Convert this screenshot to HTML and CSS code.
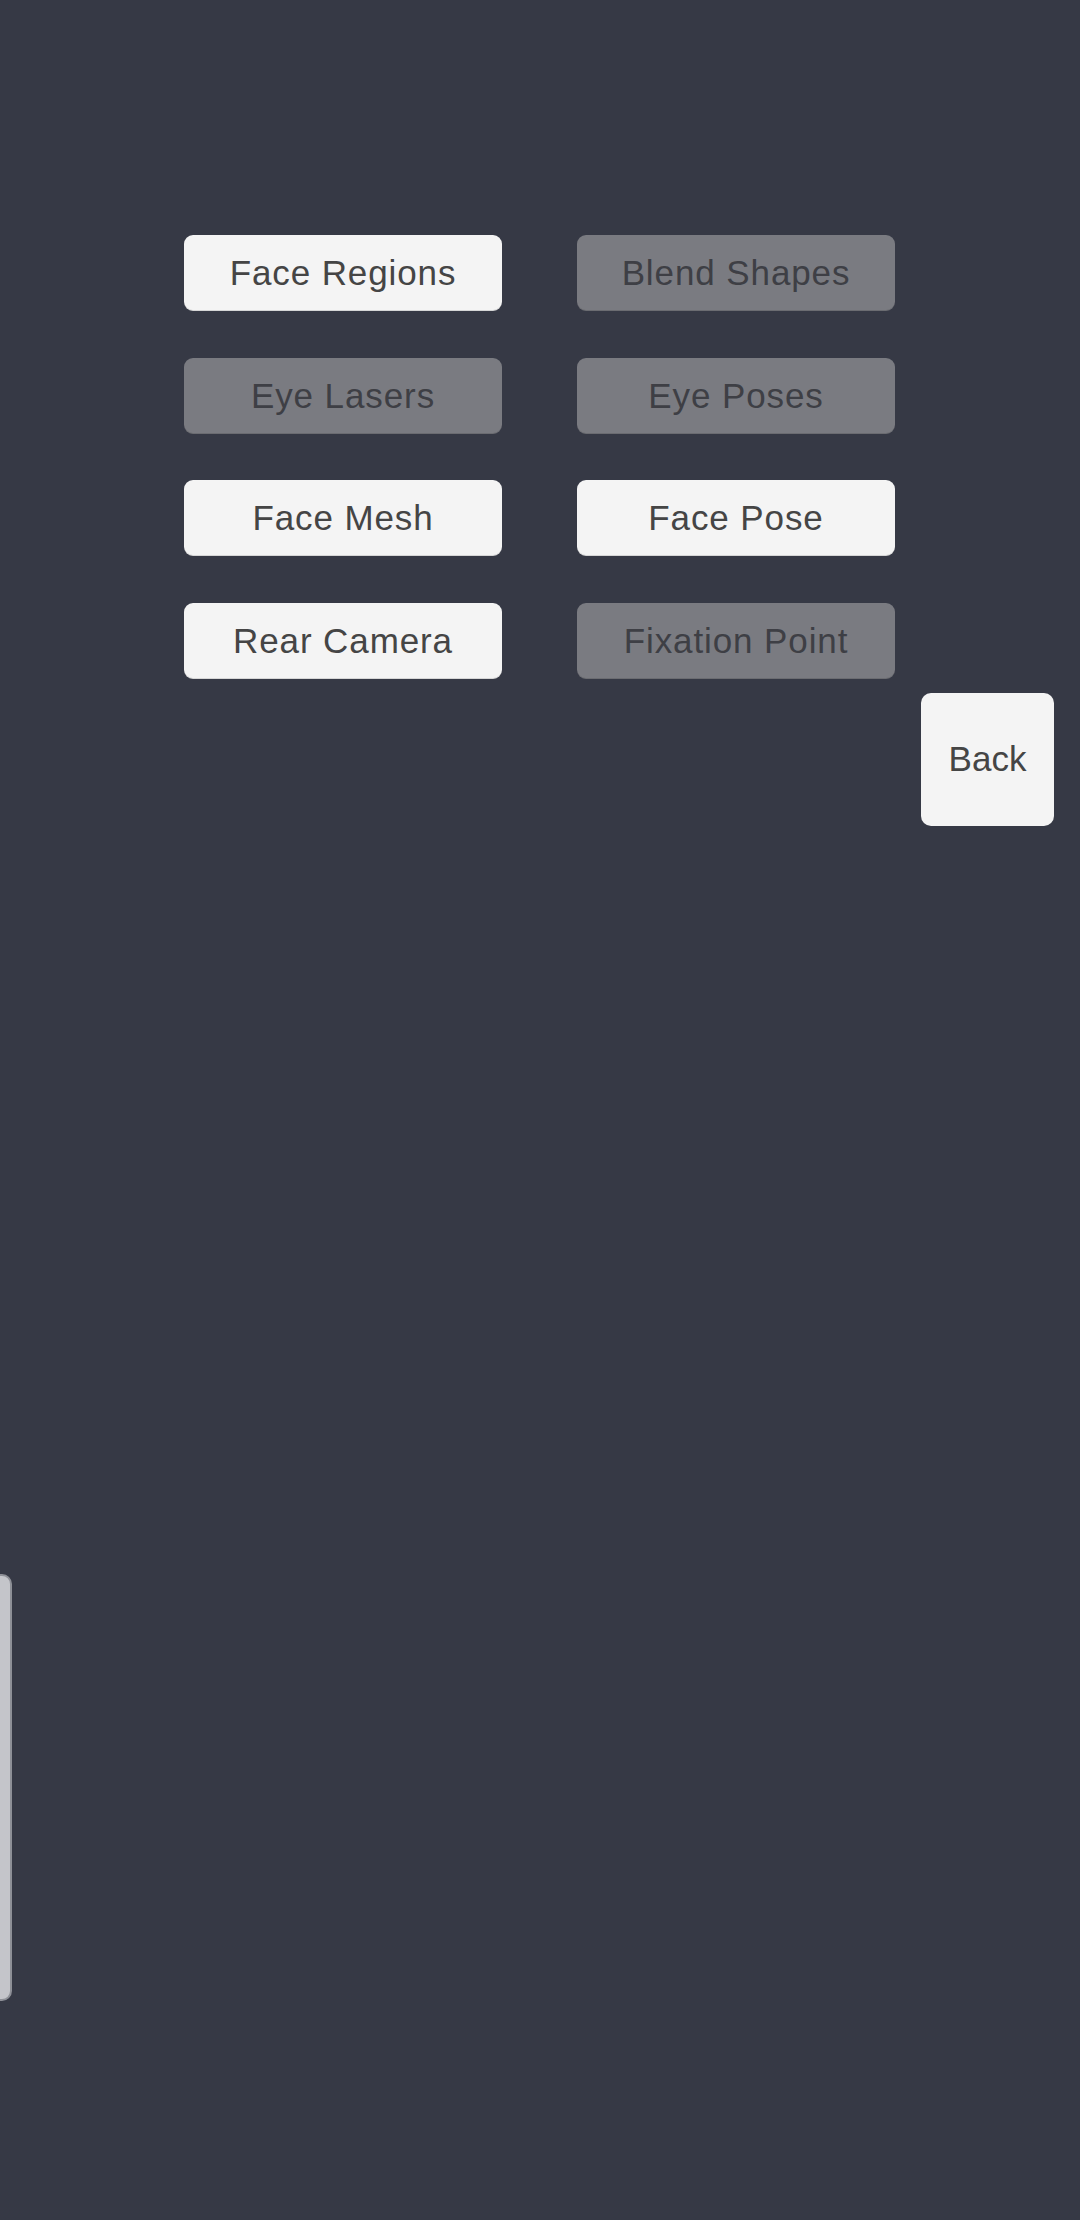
FILE: index.html
```html
<!DOCTYPE html>
<html>
<head>
<meta charset="utf-8">
<link rel="stylesheet" href="styles.css">
</head>
<body>
<div class="screen">
  <div class="menu">
    <div class="btn">Face Regions</div>
    <div class="btn off">Blend Shapes</div>
    <div class="btn off">Eye Lasers</div>
    <div class="btn off">Eye Poses</div>
    <div class="btn">Face Mesh</div>
    <div class="btn">Face Pose</div>
    <div class="btn">Rear Camera</div>
    <div class="btn off">Fixation Point</div>
  </div>
  <div class="back-row">
    <div class="back">Back</div>
  </div>
  <div class="drawer"></div>
</div>
</body>
</html>
```

FILE: styles.css
```css
html, body {
  margin: 0;
  padding: 0;
}
body {
  width: 1080px;
  height: 2220px;
  background: #363945;
  font-family: "Liberation Sans", Arial, sans-serif;
  overflow: hidden;
}
.screen {
  position: relative;
  width: 1080px;
  height: 2220px;
}
.menu {
  display: grid;
  grid-template-columns: 318px 318px;
  grid-auto-rows: 76px;
  column-gap: 75px;
  row-gap: 46.5px;
  padding: 235px 0 0 184px;
}
.btn {
  background: #f4f4f4;
  border-radius: 9px;
  display: flex;
  align-items: center;
  justify-content: center;
  color: #454545;
  font-size: 35px;
  letter-spacing: 0.9px;
  box-shadow: inset 0 -1px 0 rgba(0,0,0,0.12);
}
.btn.off {
  background: #7a7b81;
  color: #3e3f45;
}
.back-row {
  display: flex;
  justify-content: flex-end;
  padding: 14px 26px 0 0;
}
.back {
  width: 133px;
  height: 133px;
  background: #f4f4f4;
  border-radius: 10px;
  display: flex;
  align-items: center;
  justify-content: center;
  color: #454545;
  font-size: 35px;
}
.drawer {
  position: absolute;
  left: -40px;
  top: 1574px;
  width: 48px;
  height: 423px;
  background: #c4c5ca;
  border: 2px solid #8e9097;
  border-radius: 10px;
}
```
